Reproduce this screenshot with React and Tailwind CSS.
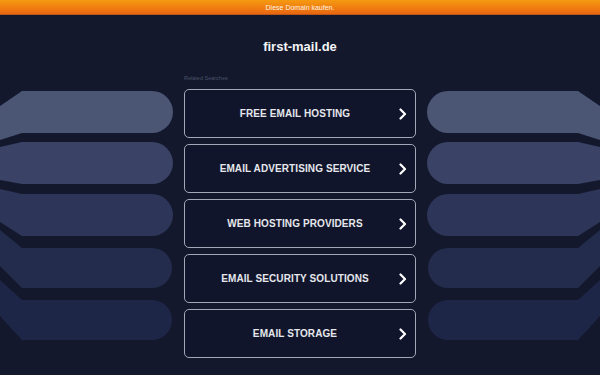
const searches = [
  'FREE EMAIL HOSTING',
  'EMAIL ADVERTISING SERVICE',
  'WEB HOSTING PROVIDERS',
  'EMAIL SECURITY SOLUTIONS',
  'EMAIL STORAGE',
]

// decorative pill fan, drawn in page coordinates (left side; mirrored for right)
const pills = [
  { d: 'M22,91 H152 A21,21 0 0 1 152,133 H22 L0,140 V106 Z', fill: '#4b5574' },
  { d: 'M22,142 H152 A21,21 0 0 1 152,184 H22 L0,180 V147 Z', fill: '#3a4365' },
  { d: 'M22,194 H152 A21,21 0 0 1 152,236 H22 L0,222 V189 Z', fill: '#2d3658' },
  { d: 'M22,248 H152 A20,20 0 0 1 152,288 H22 L0,266 V230 Z', fill: '#242c4e' },
  { d: 'M22,300 H152 A20,20 0 0 1 152,340 H22 L0,316 V280 Z', fill: '#1e2647' },
]

function Fan({ flip }) {
  return (
    <svg
      width="173"
      height="290"
      viewBox="0 72 173 290"
      className={flip ? 'shrink-0 -scale-x-100' : 'shrink-0'}
    >
      {pills.map((p, i) => (
        <path key={i} d={p.d} fill={p.fill} />
      ))}
    </svg>
  )
}

function Chevron() {
  return (
    <svg width="8" height="12" viewBox="0 0 8 12">
      <polyline points="1.5,1.5 6,6 1.5,10.5" fill="none" stroke="#ffffff" strokeWidth="2.2" strokeLinecap="round" strokeLinejoin="round" />
    </svg>
  )
}

export default function App() {
  return (
    <div
      className="w-[600px] h-[375px] overflow-hidden bg-[#13182d]"
      style={{ fontFamily: '"Liberation Sans", Arial, sans-serif' }}
    >
      <div className="h-[15px] flex items-center justify-center bg-gradient-to-b from-[#f59a12] to-[#e9650f] border-b border-[#b9561a]">
        <span className="text-[7px] text-[#fff4e2] leading-none">Diese Domain kaufen.</span>
      </div>

      <div className="h-[57px] flex items-start justify-center pt-[23px]">
        <h1 className="text-[13px] font-bold text-[#f3f4f6] leading-[18px]">first-mail.de</h1>
      </div>

      <div className="flex">
        <Fan />
        <div className="w-[232px] mx-[11px] shrink-0 flex flex-col">
          <div className="h-[17px] pt-[4px] text-[5.5px] text-[#4b5368] leading-none">Related Searches</div>
          <div className="flex flex-col gap-[6px]">
            {searches.map((s) => (
              <div
                key={s}
                className="h-[49px] flex items-center pl-[10px] border-[1.5px] border-[#a3a8b8] rounded-[5px] bg-[#11152b]"
              >
                <span className="flex-1 text-center text-[10px] font-bold text-[#e5e7eb] tracking-[0.1px]">{s}</span>
                <span className="w-[20px] flex justify-center pr-[5px]">
                  <Chevron />
                </span>
              </div>
            ))}
          </div>
        </div>
        <Fan flip />
      </div>
    </div>
  )
}
